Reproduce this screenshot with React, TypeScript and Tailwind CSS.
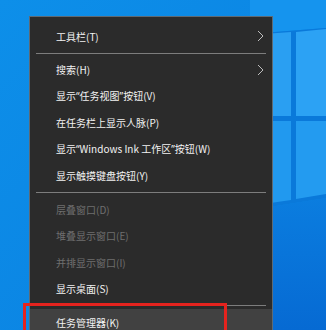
import React from "react";

type Item =
  | { kind: "item"; label: React.ReactNode; disabled?: boolean; submenu?: boolean; active?: boolean }
  | { kind: "sep" };

function Q({ c }: { c: string }) {
  return <span style={{ fontFamily: '"Noto Sans", sans-serif' }}>{c}</span>;
}

const items: Item[] = [
  { kind: "item", label: "工具栏(T)", submenu: true },
  { kind: "sep" },
  { kind: "item", label: "搜索(H)", submenu: true },
  {
    kind: "item",
    label: (
      <>
        显示<Q c="“" />任务视图<Q c="”" />按钮(V)
      </>
    ),
  },
  { kind: "item", label: "在任务栏上显示人脉(P)" },
  {
    kind: "item",
    label: (
      <>
        显示<Q c="“" />Windows Ink 工作区<Q c="”" />按钮(W)
      </>
    ),
  },
  { kind: "item", label: "显示触摸键盘按钮(Y)" },
  { kind: "sep" },
  { kind: "item", label: "层叠窗口(D)", disabled: true },
  { kind: "item", label: "堆叠显示窗口(E)", disabled: true },
  { kind: "item", label: "并排显示窗口(I)", disabled: true },
  { kind: "item", label: "显示桌面(S)" },
  { kind: "sep" },
  { kind: "item", label: "任务管理器(K)", active: true },
];

function Chevron() {
  return (
    <svg width="7" height="12" viewBox="0 0 7 12" className="shrink-0">
      <path d="M1 1 L6 6 L1 11" fill="none" stroke="#bdbdbd" strokeWidth="1" />
    </svg>
  );
}

function Wallpaper() {
  return (
    <svg className="absolute inset-0" width="326" height="330" viewBox="0 0 326 330">
      <defs>
        <linearGradient id="bg" x1="0" y1="0" x2="1" y2="1">
          <stop offset="0" stopColor="#0d8fe9" />
          <stop offset="1" stopColor="#0a7fe0" />
        </linearGradient>
        <linearGradient id="low" x1="0" y1="0" x2="0" y2="1">
          <stop offset="0" stopColor="#0b7ddf" />
          <stop offset="1" stopColor="#066ad3" />
        </linearGradient>
      </defs>
      <rect width="326" height="330" fill="url(#bg)" />
      <polygon points="250,0 326,0 326,28 250,34" fill="#1594ee" />
      <polygon points="250,34 326,28 326,198 250,210" fill="#0a79da" />
      <polygon points="250,35 291,32 291,116 250,116" fill="#2a9ff2" />
      <polygon points="296,32 326,29 326,116 296,116" fill="#2ca2f4" />
      <polygon points="250,121 291,121 291,200 250,206" fill="#2199ef" />
      <polygon points="296,121 326,121 326,194 296,199" fill="#239bf0" />
      <polygon points="250,210 326,198 326,330 250,330" fill="url(#low)" />
    </svg>
  );
}

export default function App() {
  return (
    <div
      className="relative w-[326px] h-[330px] overflow-hidden"
      style={{ fontFamily: '"Noto Sans CJK SC", "Noto Sans", sans-serif' }}
    >
      <Wallpaper />
      <div className="relative pt-[16px] pl-[29px]">
        <div className="relative w-[244px] h-[330px] bg-[#2b2b2b] border border-[#5e6a74] pt-[6px]">
          {items.map((it, i) =>
            it.kind === "sep" ? (
              <div key={i} className="h-[7px] flex items-center px-[6px]">
                <div className="h-px w-full bg-[#7d7d7d]" />
              </div>
            ) : (
              <div
                key={i}
                className={`h-[26.5px] flex items-center pl-[26px] pr-[8px] text-[10px] ${
                  it.active ? "bg-[#414141]" : ""
                } ${it.disabled ? "text-[#6f6f6f]" : "text-[#f2f2f2]"}`}
              >
                <span className="flex-1 whitespace-nowrap">{it.label}</span>
                {it.submenu && <Chevron />}
              </div>
            )
          )}
        </div>
        <div className="absolute left-[23px] top-[303px] w-[204px] h-[40px] border-[3px] border-[#e5231e]" />
      </div>
    </div>
  );
}
